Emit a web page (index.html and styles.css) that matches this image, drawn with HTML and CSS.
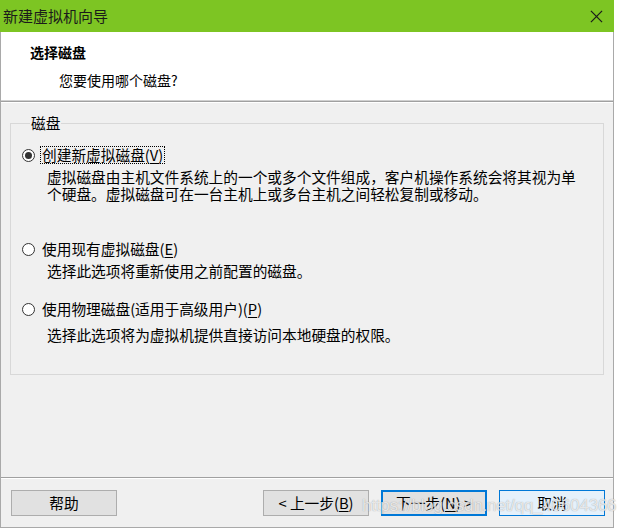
FILE: index.html
```html
<!DOCTYPE html>
<html lang="zh-CN">
<head>
<meta charset="utf-8">
<title>新建虚拟机向导</title>
<link rel="stylesheet" href="styles.css">
</head>
<body>
<div class="window">
  <div class="titlebar">
    <span class="title">新建虚拟机向导</span>
    <svg class="close" width="14" height="14" viewBox="0 0 14 14"><path d="M1 1 L13 13 M13 1 L1 13" stroke="#1a1a1a" stroke-width="1.3" fill="none"/></svg>
  </div>
  <div class="frame">
    <div class="header">
      <div class="h-title">选择磁盘</div>
      <div class="h-sub">您要使用哪个磁盘?</div>
    </div>
    <div class="main">
      <fieldset class="group">
        <legend class="group-label">磁盘</legend>
        <div class="option opt-1">
          <div class="row">
            <span class="radio checked"></span>
            <span class="label focus">创建新虚拟磁盘(<u>V</u>)</span>
          </div>
          <div class="desc">虚拟磁盘由主机文件系统上的一个或多个文件组成，客户机操作系统会将其视为单<br>个硬盘。虚拟磁盘可在一台主机上或多台主机之间轻松复制或移动。</div>
        </div>
        <div class="option opt-2">
          <div class="row">
            <span class="radio"></span>
            <span class="label">使用现有虚拟磁盘(<u>E</u>)</span>
          </div>
          <div class="desc">选择此选项将重新使用之前配置的磁盘。</div>
        </div>
        <div class="option opt-3">
          <div class="row">
            <span class="radio"></span>
            <span class="label">使用物理磁盘(适用于高级用户)(<u>P</u>)</span>
          </div>
          <div class="desc desc-3">选择此选项将为虚拟机提供直接访问本地硬盘的权限。</div>
        </div>
      </fieldset>
    </div>
    <div class="footer">
      <button class="btn">帮助</button>
      <div class="spacer"></div>
      <button class="btn">&lt; 上一步(<u>B</u>)</button>
      <button class="btn btn-default">下一步(<u>N</u>) &gt;</button>
      <button class="btn btn-hover">取消</button>
      <div class="watermark">https://blog.csdn.net/qq_40604366</div>
    </div>
  </div>
</div>
</body>
</html>
```

FILE: styles.css
```css
* { box-sizing: border-box; }
html, body { margin: 0; padding: 0; background: #ffffff; }
body {
  font-family: "Noto Sans CJK SC", "Microsoft YaHei", sans-serif;
  color: #000;
  width: 617px;
  height: 529px;
  overflow: hidden;
}
.window {
  width: 614px;
  height: 528px;
  display: flex;
  flex-direction: column;
}
.titlebar {
  height: 32px;
  flex: none;
  background: #7dc523;
  display: flex;
  align-items: center;
  justify-content: space-between;
  padding: 0 11px 0 3px;
}
.title {
  font-size: 15px;
  line-height: 18px;
  color: #1b1b1b;
}
.close { display: block; width: 13px; height: 13px; }
.frame {
  flex: 1;
  display: flex;
  flex-direction: column;
  border-left: 1px solid #a9a9a9;
  border-right: 1px solid #a9a9a9;
  border-bottom: 1px solid #a9a9a9;
}
.header {
  height: 70px;
  flex: none;
  background: #fff;
  padding: 11px 0 0 29px;
  border-bottom: 1px solid #a0a0a0;
  box-shadow: inset 0 -1px 0 #d0d0d0;
}
.h-title {
  font-size: 14px;
  font-weight: bold;
  line-height: 18px;
}
.h-sub {
  font-size: 14px;
  line-height: 18px;
  margin: 10px 0 0 29px;
}
.main {
  flex: 1;
  background: #f0f0f0;
  padding: 11px 9px 0 9px;
  font-size: 14.7px;
  border-top: 1px solid #fff;
}
.group {
  margin: 0;
  padding: 0 0 31px 11px;
  border: 1px solid #d8d8d8;
  min-width: 0;
}
.group-label {
  padding: 0 1px;
  margin-left: 8px;
  line-height: 18px;
}
.option { display: flex; flex-direction: column; }
.opt-1 { margin-top: 14px; }
.opt-2 { margin-top: 38px; }
.opt-3 { margin-top: 21px; }
.row {
  display: flex;
  align-items: center;
  height: 18px;
}
.radio {
  width: 13px;
  height: 13px;
  border: 1px solid #333;
  border-radius: 50%;
  background: #fff;
  flex: none;
  display: flex;
  align-items: center;
  justify-content: center;
  margin-right: 5px;
}
.radio.checked::after {
  content: "";
  width: 7px;
  height: 7px;
  border-radius: 50%;
  background: #333;
}
.label {
  line-height: 16px;
  padding: 0 1px;
  border: 1px solid transparent;
}
.label.focus { border: 1px dotted #000; }
.desc {
  margin: 4px 0 0 25px;
  line-height: 17px;
}
.desc-3 { margin-top: 8px; }
u { text-decoration: underline; text-underline-offset: 2px; }
.footer {
  height: 50px;
  flex: none;
  background: #f0f0f0;
  border-top: 1px solid #a0a0a0;
  box-shadow: inset 0 1px 0 #fff;
  display: flex;
  align-items: flex-start;
  padding: 12px 8px 0 10px;
  gap: 12px;
  position: relative;
}
.spacer { flex: 1; }
.btn {
  width: 106px;
  height: 26px;
  border: 1px solid #adadad;
  background: #e1e1e1;
  font-family: "Noto Sans CJK SC", "Microsoft YaHei", sans-serif;
  font-size: 14.7px;
  color: #000;
  padding: 0;
  line-height: 22px;
}
.btn-default {
  border: 2px solid #0078d7;
}
.btn-hover {
  border: 1px solid #0078d7;
  background: #e5f1fb;
}
.watermark {
  position: absolute;
  left: 361px;
  top: 18px;
  font-family: "Liberation Sans", Arial, sans-serif;
  font-size: 17px;
  line-height: 20px;
  color: rgba(255, 255, 255, 0.75);
  text-shadow: 0 0 1px rgba(90, 90, 90, 0.6);
  letter-spacing: -0.2px;
  pointer-events: none;
}
```
